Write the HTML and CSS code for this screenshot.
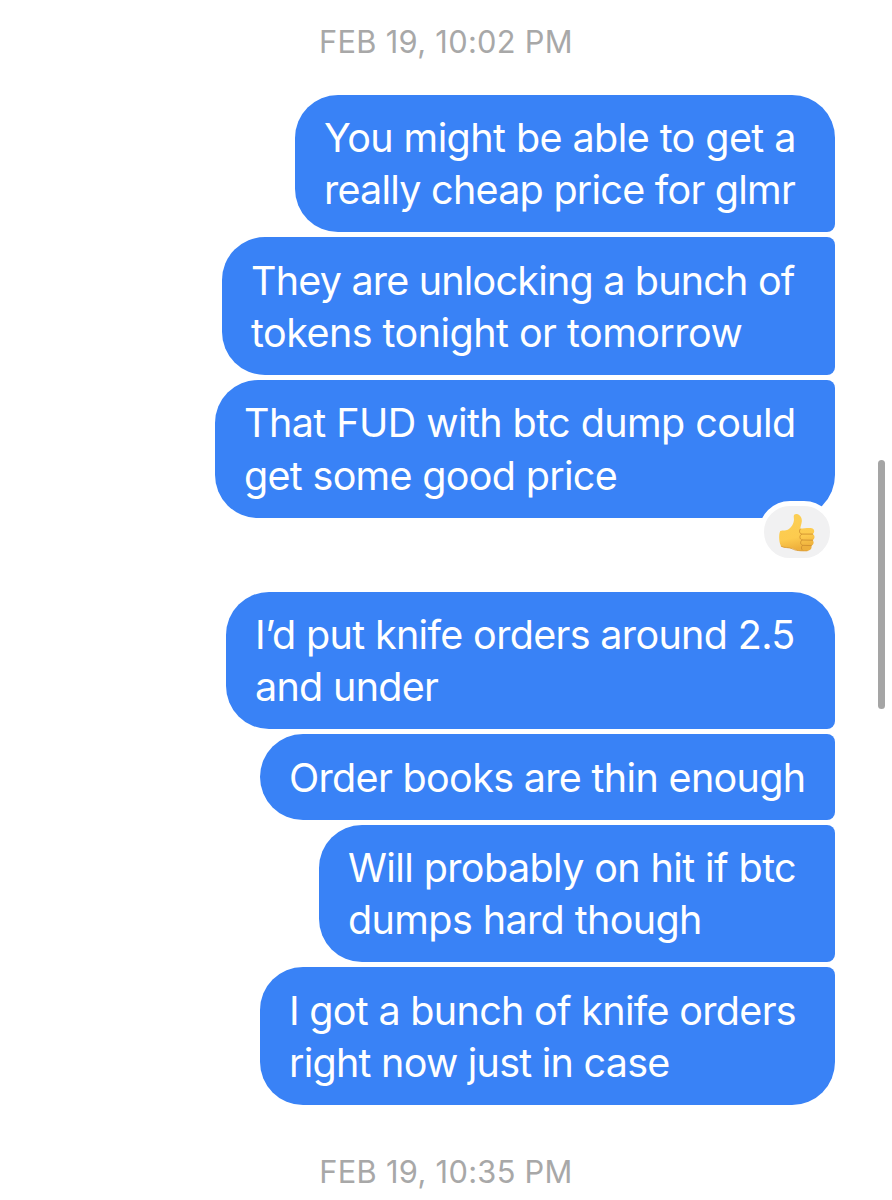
FILE: index.html
```html
<!DOCTYPE html>
<html lang="en">
<head>
<meta charset="utf-8">
<title>Messages</title>
<link rel="stylesheet" href="styles.css">
</head>
<body>
<main class="chat">
  <time class="stamp">FEB 19, 10:02 PM</time>
  <section class="group">
    <p class="bubble first w540"><span class="t57">You might be able to get a</span><span class="t75">really cheap price for glmr</span></p>
    <p class="bubble w613"><span class="t80">They are unlocking a bunch of</span><span class="t55">tokens tonight or tomorrow</span></p>
    <div class="bubble last w620"><span class="t57">That FUD with btc dump could</span><span class="t70">get some good price</span>
      <div class="reaction">
        <svg class="thumb" viewBox="0 0 38 40">
          <defs><linearGradient id="skin" x1="0" y1="0" x2="0.2" y2="1"><stop offset="0" stop-color="#fbcf55"/><stop offset="0.7" stop-color="#fdcb4e"/><stop offset="1" stop-color="#eeb03c"/></linearGradient></defs>
          <path fill="url(#skin)" d="M2.2 19C5 18.2 8.5 19.2 11.2 16.8C14.5 13.6 16.6 10.2 15.8 5.4C15.3 2.8 16.8 1.7 18.8 2C22.2 2.6 24.2 6 23.8 9.4C23.5 12.2 22.2 14.6 22.4 16.8C25 16.2 29.5 15.9 32.6 16C36.6 16.2 37.3 20.6 34.6 22.1C37.3 23.4 37 27 34.7 28.2C36.4 29.8 35.8 32.8 33.4 33.6C34.2 36.4 32.5 38.8 29.2 38.9H22.5C18 38.8 15.5 36.4 12.2 36C8.7 35.6 4.3 36 2.7 33.4C.9 29.5.6 22.2 2.2 19Z"/>
          <path fill="none" stroke="#cf9030" stroke-width=".9" stroke-linecap="round" d="M22.4 17C20.8 18.5 21.3 21.4 23.6 22.1L34.6 22.1M23.5 22.2C21 23.8 21.6 27.2 24 28L34.7 28.2M24 28C21.9 29.5 22.2 32.6 24.5 33.3L33.4 33.6M24.5 33.4C22.9 34.7 23 37.2 24.5 38.2"/>
          <path fill="none" stroke="#dd9e3a" stroke-width=".9" stroke-linecap="round" d="M3.2 34.3C6.5 36.2 10.5 35 14 36.7C17.5 38.6 22 39 29 38.8"/>
        </svg>
      </div>
    </div>
  </section>
  <section class="group second">
    <p class="bubble first w609"><span class="t65">I’d put knife orders around 2.5</span><span class="t70">and under</span></p>
    <p class="bubble w575"><span class="t65">Order books are thin enough</span></p>
    <p class="bubble w516"><span class="t60">Will probably on hit if btc</span><span class="t60">dumps hard though</span></p>
    <p class="bubble last w575"><span class="t70">I got a bunch of knife orders</span><span class="t75">right now just in case</span></p>
  </section>
  <time class="stamp end">FEB 19, 10:35 PM</time>
</main>
<div class="scrollbar"></div>
</body>
</html>
```
FILE: styles.css
```css
* { box-sizing: border-box; }
body { margin: 0; height: 1200px; overflow: hidden; background: #fff; font-family: Inter, "Noto Sans", sans-serif; }
.chat { display: flex; flex-direction: column; height: 1200px; padding-top: 24px; }
.stamp { align-self: center; height: 36px; line-height: 36px; font-size: 30.8px; font-weight: 430; letter-spacing: 0.3px; color: #a8a8a8; white-space: nowrap; }
.group { display: flex; flex-direction: column; align-items: flex-end; gap: 5px; margin-top: 34.5px; padding-right: 57px; }
.group.second { margin-top: 74px; }
.bubble { position: relative; display: flex; flex-direction: column; margin: 0; padding: 17.4px 0 15.7px 29px; border-radius: 43px 8px 8px 43px; background: #3982f6; color: #fff; font-size: 39.5px; line-height: 52.3px; white-space: nowrap; }
.first { border-top-right-radius: 43px; }
.last { border-bottom-right-radius: 43px; }
.w540 { width: 540px; }
.w613 { width: 613px; }
.w620 { width: 620px; }
.w609 { width: 609px; }
.w575 { width: 575px; }
.w516 { width: 516px; }

/* optical tracking per line */
.t55 { letter-spacing: -0.54px; }
.t57 { letter-spacing: -0.58px; }
.t60 { letter-spacing: -0.61px; }
.t65 { letter-spacing: -0.67px; }
.t70 { letter-spacing: -0.7px; }
.t75 { letter-spacing: -0.76px; }
.t80 { letter-spacing: -0.8px; }

.reaction { position: absolute; right: 0; bottom: -45px; display: flex; align-items: center; justify-content: center; width: 76px; height: 62px; border: 5px solid #fff; border-radius: 31px; background: #f1f1f2; }
.thumb { width: 38px; height: 40px; }
.stamp.end { margin-top: 48.9px; }
.scrollbar { position: absolute; top: 460px; right: 7px; width: 7px; height: 249px; border-radius: 4px; background: #a5a5a5; }
```
